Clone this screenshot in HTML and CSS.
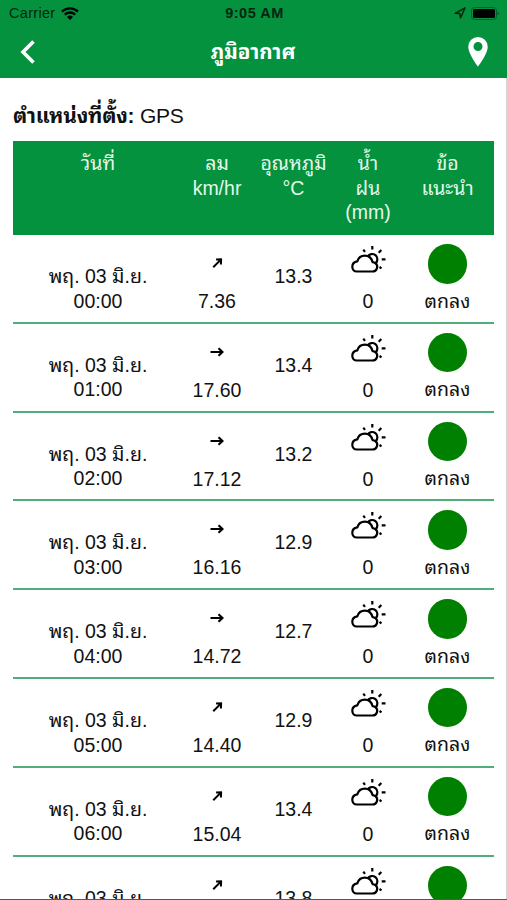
FILE: index.html
```html
<!DOCTYPE html>
<html lang="th">
<head>
  <meta charset="UTF-8">
  <meta name="viewport" content="width=device-width, initial-scale=1.0">
  <title>ภูมิอากาศ</title>
  <link rel="stylesheet" href="styles.css">
</head>
<body>
  <svg class="symbols">
    <symbol id="cloud" viewBox="0 0 36 30">
      <path d="M6.800 26.500H22.500a4.700 4.700 0 0 0 2.900-8.400c-.8-.6-1.700-.9-2.900-1C21.600 13.200 18.600 10.600 14.800 10.600c-3.500 0-6.300 2-7.500 5.700C4.300 16.800 2.300 18.900 2.300 21.700c0 2.800 1.900 4.800 4.500 4.800z"/>
      <path d="M17.600 11.500a5.300 5.300 0 1 1 8.200 6.600"/>
      <path d="M22.300 1v3.600M13.300 4.600l1.700 2.200M31.300 5l-2.600 2.800M31.700 14.300h3.800M29.500 22l2 1.300"/>
    </symbol>
    <symbol id="arrow" viewBox="0 0 14 10">
      <path d="M.5 5h12M8.500 1.300L12.500 5l-4 3.700"/>
    </symbol>
  </svg>
  <header class="header">
    <div class="status-bar">
      <div class="carrier">
        <span>Carrier</span>
        <svg class="wifi" viewBox="0 0 18 13">
          <path d="M1 4.700a11.500 11.500 0 0 1 16 0M3.800 7.600a7.500 7.500 0 0 1 10.400 0"/>
          <path class="wifi-dot" d="M6 9.900a4.400 4.400 0 0 1 6 0l-3 3z"/>
        </svg>
      </div>
      <div class="clock">9:05 AM</div>
      <div class="device">
        <svg class="location" viewBox="0 0 12 12"><path d="M1 6.300L11 1 6.500 11 5.800 6.500z"/></svg>
        <svg class="battery" viewBox="0 0 29 13">
          <rect class="battery-case" x=".5" y=".5" width="25" height="12" rx="3"/>
          <rect x="2" y="2" width="22" height="9" rx="1.500"/>
          <path class="battery-tip" d="M26.500 4.500q3 2 0 4z"/>
        </svg>
      </div>
    </div>
    <div class="nav-bar">
      <svg class="back" viewBox="0 0 16 24"><path d="M13.500 1.500L3 12l10.500 10.500"/></svg>
      <h1>ภูมิอากาศ</h1>
      <svg class="pin" viewBox="0 0 20 30"><path fill-rule="evenodd" d="M10 0a9.700 9.700 0 0 0-9.700 9.700C.3 17 10 29.500 10 29.500S19.700 17 19.700 9.700A9.700 9.700 0 0 0 10 0zm0 5a4.500 4.500 0 1 1 0 9 4.500 4.500 0 0 1 0-9z"/></svg>
    </div>
  </header>
  <main class="content">
    <h2><b>ตำแหน่งที่ตั้ง:</b> GPS</h2>
    <div class="row table-head">
      <div>วันที่</div>
      <div>ลม<br>km/hr</div>
      <div>อุณหภูมิ<br>°C</div>
      <div>น้ำ<br>ฝน<br>(mm)</div>
      <div>ข้อ<br>แนะนำ</div>
    </div>
    <div id="forecast"></div>
  </main>
  <script src="script.js"></script>
</body>
</html>
```
FILE: styles.css
```css
* {
  box-sizing: border-box;
}

body {
  margin: 0;
  height: 900px;
  overflow: hidden;
  display: flex;
  flex-direction: column;
  background-color: #fff;
  border-bottom: 1px solid #55565a;
  color: #111;
  font-family: "Liberation Sans", "Noto Sans Thai Looped", Loma, Garuda, Waree, FreeSans, sans-serif;
}

.symbols {
  display: none;
}

/* Header */
.header {
  flex: none;
  height: 78px;
  background-color: #04923e;
}

.status-bar {
  height: 26px;
  display: grid;
  grid-template-columns: 1fr 80px 1fr;
  align-items: center;
  padding: 0 7px 0 9px;
  color: #03260f;
  font-size: 14.5px;
}

.carrier {
  display: flex;
  align-items: center;
  gap: 6px;
  letter-spacing: 0.3px;
}

.wifi {
  width: 18px;
  height: 13px;
  fill: none;
  stroke: #000;
  stroke-width: 2.3;
}

.wifi-dot {
  fill: #000;
  stroke: none;
}

.clock {
  text-align: center;
  font-weight: bold;
  font-size: 14.5px;
  letter-spacing: 0.5px;
  white-space: nowrap;
}

.device {
  display: flex;
  justify-content: flex-end;
  align-items: center;
  gap: 5px;
}

.location {
  width: 12px;
  height: 12px;
  fill: none;
  stroke: #03260f;
  stroke-width: 1.5;
  stroke-linejoin: round;
}

.battery {
  width: 29px;
  height: 13px;
}

.battery-case {
  fill: none;
  stroke: #03602a;
}

.battery-tip {
  fill: #03602a;
}

.nav-bar {
  height: 52px;
  display: flex;
  justify-content: space-between;
  align-items: center;
  padding: 0 19px 0 20px;
}

.nav-bar h1 {
  margin: 0;
  padding: 0 0 5px 2px;
  color: #fff;
  font-size: 20.6px;
}

.back {
  width: 16px;
  height: 24px;
  fill: none;
  stroke: #fff;
  stroke-width: 3.6;
}

.pin {
  width: 20px;
  height: 30px;
  fill: #fff;
}

/* Forecast table */
.content {
  flex: 1;
  min-height: 0;
  overflow: hidden;
  padding: 0 12px 0 13px;
  border-right: 1px solid #d5d5d5;
}

.content h2 {
  height: 63px;
  margin: 0;
  padding-top: 24px;
  font-size: 21px;
  font-weight: normal;
  line-height: 28px;
  letter-spacing: -0.25px;
  white-space: nowrap;
}

.row {
  display: grid;
  grid-template-columns: 170px 68px 85px 64px 95px;
  height: 88.8px;
  border-bottom: 2px solid #4fae7a;
  font-size: 19.5px;
  line-height: 24.6px;
  text-align: center;
}

.table-head {
  height: 94px;
  padding-top: 10px;
  border-bottom: none;
  background-color: #04923e;
  color: #e6f7ea;
}

.date {
  padding-top: 29px;
}

.wind,
.rain,
.advice {
  display: flex;
  flex-direction: column;
  align-items: center;
}

.wind {
  padding-top: 23px;
}

.arrow {
  width: 14px;
  height: 10px;
  margin-bottom: 21px;
  fill: none;
  stroke: #000;
  stroke-width: 2.2;
}

.arrow.northeast {
  width: 13px;
  transform: rotate(-45deg);
}

.temperature {
  padding-top: 29px;
}

.rain {
  padding-top: 10px;
}

.cloud {
  width: 36px;
  height: 30px;
  margin-bottom: 14px;
  fill: none;
  stroke: #000;
  stroke-width: 2.2;
  stroke-linejoin: round;
}

.advice {
  padding-top: 9px;
}

.dot {
  width: 39.5px;
  height: 39.5px;
  margin-bottom: 5px;
  border-radius: 50%;
  background-color: #008000;
}
```
FILE: script.js
```js
var forecast = [
  { time: "00:00", wind: "7.36", direction: "northeast", temperature: "13.3", rain: "0", advice: "ตกลง" },
  { time: "01:00", wind: "17.60", direction: "east", temperature: "13.4", rain: "0", advice: "ตกลง" },
  { time: "02:00", wind: "17.12", direction: "east", temperature: "13.2", rain: "0", advice: "ตกลง" },
  { time: "03:00", wind: "16.16", direction: "east", temperature: "12.9", rain: "0", advice: "ตกลง" },
  { time: "04:00", wind: "14.72", direction: "east", temperature: "12.7", rain: "0", advice: "ตกลง" },
  { time: "05:00", wind: "14.40", direction: "northeast", temperature: "12.9", rain: "0", advice: "ตกลง" },
  { time: "06:00", wind: "15.04", direction: "northeast", temperature: "13.4", rain: "0", advice: "ตกลง" },
  { time: "", wind: "", direction: "northeast", temperature: "13.8", rain: "", advice: "" }
];

var container = document.getElementById("forecast");

forecast.forEach(item => {
  var row = document.createElement("div");
  row.className = "row";
  row.innerHTML = `
    <div class="date">พฤ. 03 มิ.ย.<br>${item.time}</div>
    <div class="wind">
      <svg class="arrow ${item.direction}"><use href="#arrow"/></svg>
      <span>${item.wind}</span>
    </div>
    <div class="temperature">${item.temperature}</div>
    <div class="rain">
      <svg class="cloud"><use href="#cloud"/></svg>
      <span>${item.rain}</span>
    </div>
    <div class="advice">
      <div class="dot"></div>
      <span>${item.advice}</span>
    </div>`;
  container.appendChild(row);
});
```
